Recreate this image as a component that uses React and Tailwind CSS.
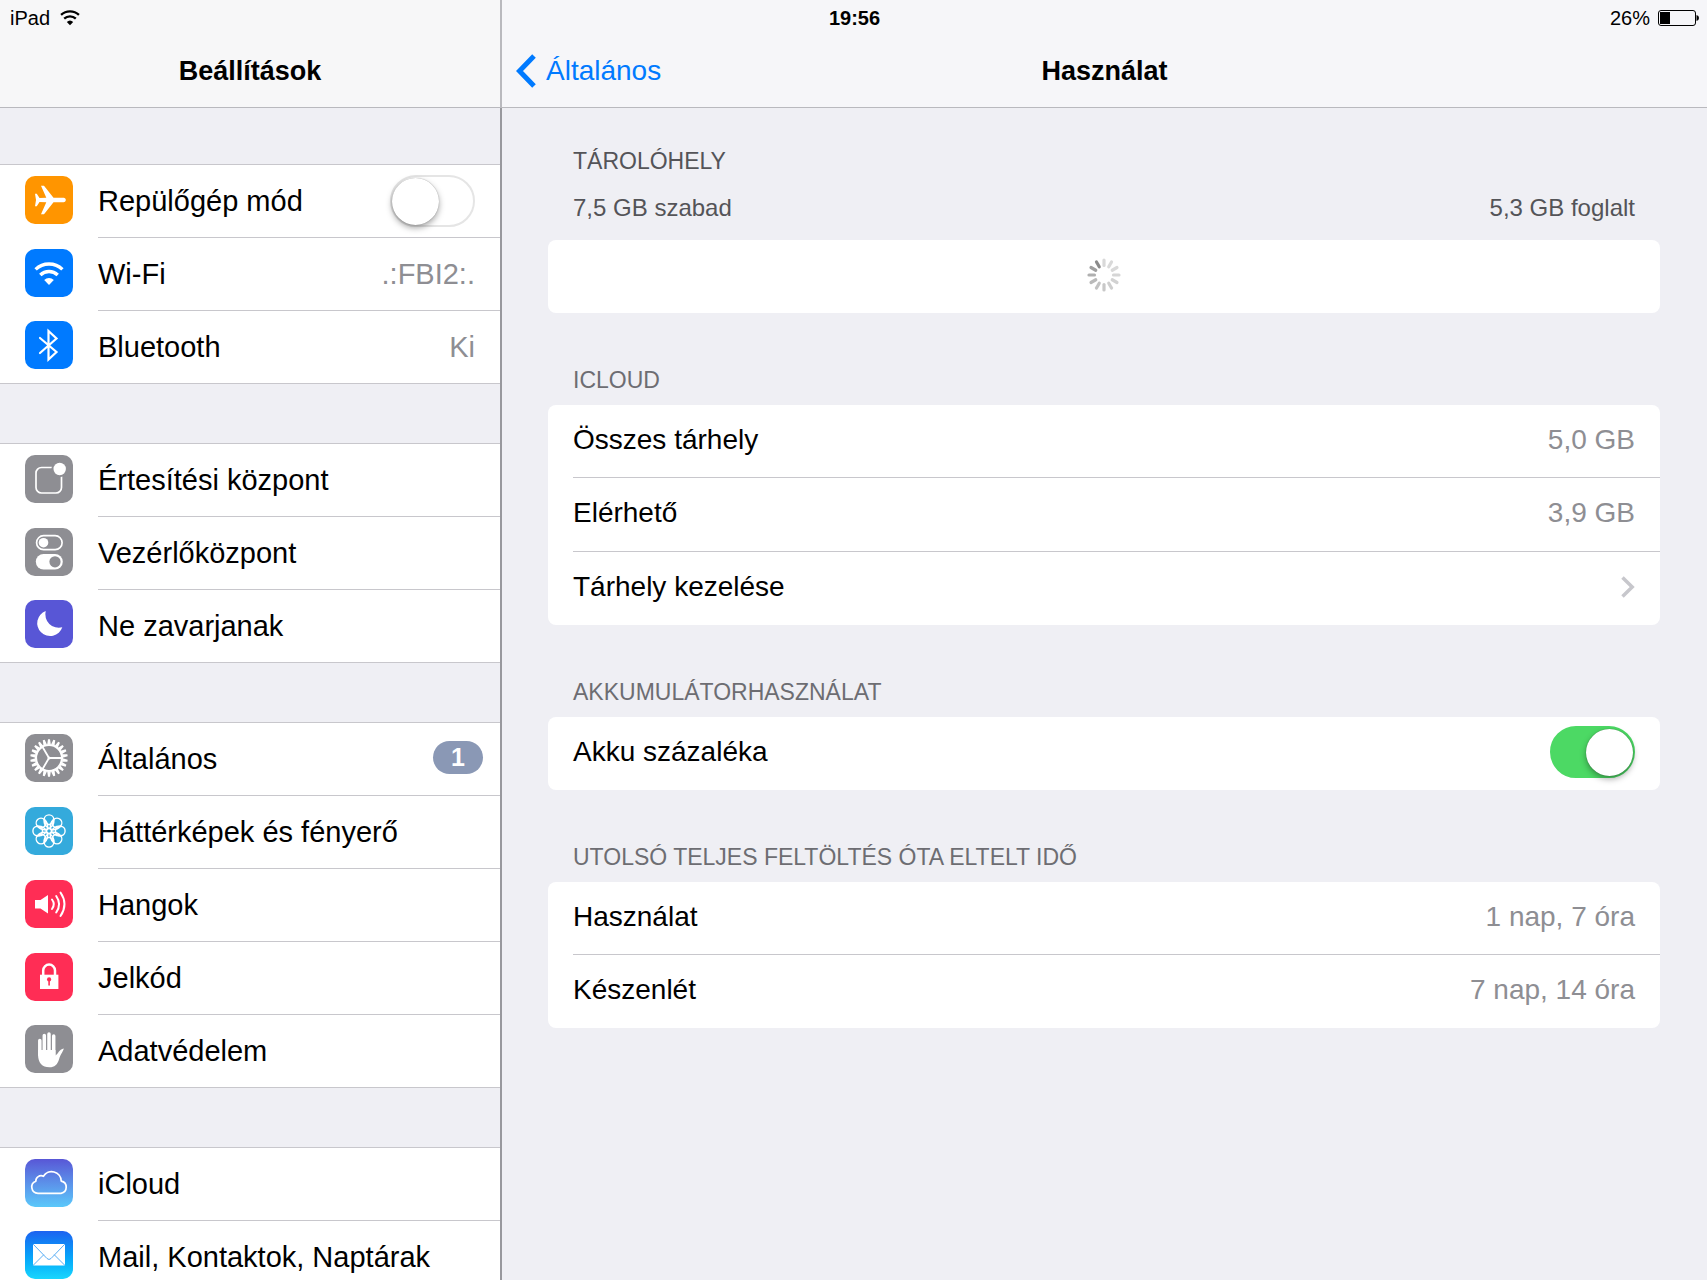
import React from "react";

function WifiGlyph({ className, viewBox }) {
  return (
    <svg className={className} viewBox={viewBox} fill="none" stroke="currentColor" aria-hidden="true">
      <path d="M10.6 20.4a19.2 19.2 0 0 1 26.8 0" strokeWidth="3.4" />
      <path d="M15.3 26a12.4 12.4 0 0 1 17.4 0" strokeWidth="3.4" />
      <path d="M19.2 31a7 7 0 0 1 9.600 0L24 36Z" fill="currentColor" stroke="none" />
    </svg>
  );
}

function Glyph({ children }) {
  return (
    <svg
      className="size-12"
      viewBox="0 0 48 48"
      fill="none"
      stroke="currentColor"
      strokeWidth="1.7"
      strokeLinecap="round"
      strokeLinejoin="round"
      aria-hidden="true"
    >
      {children}
    </svg>
  );
}

const PlaneIcon = () => (
  <Glyph>
    <path
      stroke="none"
      fill="currentColor"
      d="M38.6 21.8c1.4 0 2.2 1 2.2 2.2s-.8 2.2-2.2 2.2H28.5L19 38.2h-3L21.3 26.3l-6.800-.3-2.700 4.200H10L11 24l-1-6.200h1.800l2.700 4.200 6.800-.3L16 9.800h3l9.500 12Z"
    />
  </Glyph>
);

const BluetoothIcon = () => (
  <Glyph>
    <path d="M15 17 31.500 31l-8 7.500V10l8 7.500L15 32" strokeWidth="2.2" strokeLinejoin="miter" />
  </Glyph>
);

const NotificationIcon = () => (
  <Glyph>
    <rect x="11" y="12.5" width="25.5" height="25.5" rx="5.5" />
    <circle cx="34.7" cy="14" r="8.3" fill="#8e8e93" stroke="none" />
    <circle cx="34.7" cy="14" r="6.2" fill="currentColor" stroke="none" />
  </Glyph>
);

const ControlIcon = () => (
  <Glyph>
    <rect x="11.6" y="7.7" width="25.5" height="14" rx="7" />
    <circle cx="18.5" cy="14.7" r="4.8" fill="currentColor" stroke="none" />
    <rect x="10.8" y="26" width="27" height="15.6" rx="7.8" fill="currentColor" stroke="none" />
    <circle cx="30" cy="33.8" r="5.6" fill="#8e8e93" stroke="none" />
  </Glyph>
);

const MoonIcon = () => (
  <Glyph>
    <path
      d="M20.7 11a12.9 12.9 0 1 0 16.6 16.3A13.5 13.5 0 0 1 20.7 11Z"
      fill="currentColor"
      stroke="none"
    />
  </Glyph>
);

const teeth = Array.from({ length: 22 }, (_, i) => (i * 360) / 22);

const GearIcon = () => (
  <Glyph>
    {teeth.map((a) => (
      <path
        key={a}
        d="M22.2 10.5 23 5.300h2L25.800 10.500Z"
        fill="currentColor"
        stroke="none"
        transform={`rotate(${a} 24 24)`}
      />
    ))}
    <circle cx="24" cy="24" r="13" strokeWidth="2.2" />
    <path d="M24 24h12.500M24 24l-6.300-10.800M24 24l-6.300 10.800" strokeWidth="1.8" />
    <circle cx="24" cy="24" r="1.5" fill="currentColor" stroke="none" />
  </Glyph>
);

const petals = [0, 45, 90, 135, 180, 225, 270, 315];

const FlowerIcon = () => (
  <Glyph>
    {petals.map((a) => (
      <g key={a} transform={`rotate(${a} 24 24)`} strokeWidth="1.4">
        <circle cx="24" cy="12.7" r="4.8" />
        <path d="M24 21.500c-3.600-2-5.200-5-4.800-8.800M24 21.500c3.600-2 5.200-5 4.800-8.800" />
      </g>
    ))}
    <circle cx="24" cy="24" r="2.4" strokeWidth="1.3" />
  </Glyph>
);

const SpeakerIcon = () => (
  <Glyph>
    <path d="M10 20h5.500l7.500-5v18.500l-7.500-5H10Z" fill="currentColor" stroke="none" />
    <path d="M27 19.500q3.600 4.700 0 9.500M31.200 16q5.800 8.300 0 16.500M35.500 12.500q8 11.700 0 23.500" strokeWidth="2" />
  </Glyph>
);

const LockIcon = () => (
  <Glyph>
    <path d="M18.2 22.500v-5a5.900 5.900 0 0 1 11.800 0v5" strokeWidth="2.5" />
    <rect x="15" y="21.7" width="18.4" height="14.3" fill="currentColor" stroke="none" />
    <circle cx="24.1" cy="26.4" r="2.1" fill="#ff2d55" stroke="none" />
    <path d="M24.1 27v5" stroke="#ff2d55" strokeWidth="1.6" />
  </Glyph>
);

const HandIcon = () => (
  <Glyph>
    <path d="M14.8 15.500V30M19.300 10.500V30M24 9V30M28.700 11V30" strokeWidth="3.5" />
    <path
      d="M13.1 25H30.500v5.500c2.500-1.500 3.500-6 8.300-7-.4 2.500-3.200 5.500-4.800 11-1.500 5-4.500 7.800-9.500 7.800-7.500 0-11.400-4.800-11.400-12.300Z"
      fill="currentColor"
      stroke="none"
    />
  </Glyph>
);

const CloudIcon = () => (
  <Glyph>
    <path d="M13 34.300A6.200 6.200 0 0 1 10.800 22.300a5.300 5.300 0 0 1 7.600-5A9.600 9.600 0 0 1 36.200 22.100 6.200 6.200 0 0 1 36 34.300Z" />
  </Glyph>
);

const MailIcon = () => (
  <Glyph>
    <rect x="8" y="13" width="32" height="21.4" rx="1" fill="currentColor" stroke="none" />
    <path d="M8.500 13.500 22 27.500q2 2 4 0L39.500 13.500M8.500 34l10-10M39.500 34l-10-10" stroke="#5aaef5" strokeWidth="1" />
  </Glyph>
);

const TileWifi = () => <WifiGlyph className="size-12" viewBox="0 0 48 48" />;

const groups = [
  [
    { label: "Repülőgép mód", icon: PlaneIcon, tile: "bg-[#ff9500]", toggle: true },
    { label: "Wi-Fi", icon: TileWifi, tile: "bg-[#007aff]", value: ".:FBI2:." },
    { label: "Bluetooth", icon: BluetoothIcon, tile: "bg-[#007aff]", value: "Ki" },
  ],
  [
    { label: "Értesítési központ", icon: NotificationIcon, tile: "bg-[#8e8e93]" },
    { label: "Vezérlőközpont", icon: ControlIcon, tile: "bg-[#8e8e93]" },
    { label: "Ne zavarjanak", icon: MoonIcon, tile: "bg-[#5856d6]" },
  ],
  [
    { label: "Általános", icon: GearIcon, tile: "bg-[#8e8e93]", badge: "1" },
    { label: "Háttérképek és fényerő", icon: FlowerIcon, tile: "bg-[#34aadc]" },
    { label: "Hangok", icon: SpeakerIcon, tile: "bg-[#ff2d55]" },
    { label: "Jelkód", icon: LockIcon, tile: "bg-[#ff2d55]" },
    { label: "Adatvédelem", icon: HandIcon, tile: "bg-[#8e8e93]" },
  ],
  [
    { label: "iCloud", icon: CloudIcon, tile: "bg-linear-to-b from-[#5856d6] to-[#5ac8fa]" },
    { label: "Mail, Kontaktok, Naptárak", icon: MailIcon, tile: "bg-linear-to-b from-[#1d62f0] to-[#1ad6fd]" },
  ],
];

function Switch({ id, defaultChecked }) {
  return (
    <input
      id={id}
      type="checkbox"
      role="switch"
      defaultChecked={defaultChecked}
      className="flex h-[52px] w-[85px] shrink-0 appearance-none items-center rounded-full border-2 border-[#e5e5e5] bg-white before:size-[47px] before:rounded-full before:bg-white before:shadow-[0_3px_6px_rgba(0,0,0,0.35),0_0_1px_rgba(0,0,0,0.4)] before:content-[''] checked:justify-end checked:border-[#4cd964] checked:bg-[#4cd964]"
    />
  );
}

function SidebarRow({ item, last }) {
  const Icon = item.icon;
  const Row = item.toggle ? "label" : "button";
  const rowProps = item.toggle ? { htmlFor: "airplane" } : { type: "button" };
  return (
    <li className={last ? "border-b border-[#c8c7cc]" : ""}>
      <Row
        {...rowProps}
        className={
          last
            ? "flex h-[72px] w-full items-center pl-[25px] text-left"
            : "flex h-[73px] w-full items-center pl-[25px] text-left"
        }
      >
        <span className={`mb-1 size-12 shrink-0 overflow-hidden rounded-[10px] text-white ${item.tile}`}>
          <Icon />
        </span>
        <span
          className={
            last
              ? "ml-[25px] flex h-full flex-1 items-center justify-between"
              : "ml-[25px] flex h-full flex-1 items-center justify-between border-b border-[#c8c7cc]"
          }
        >
          <span>{item.label}</span>
          {item.toggle && (
            <span className="pr-[25px]">
              <Switch id="airplane" />
            </span>
          )}
          {item.value && <span className="pr-[25px] text-[#8e8e93]">{item.value}</span>}
          {item.badge && (
            <span className="mr-[17px] mb-1 flex h-[33px] w-[50px] items-center justify-center rounded-full bg-[#8a98b5] text-[25px] font-bold text-white">
              {item.badge}
            </span>
          )}
        </span>
      </Row>
    </li>
  );
}

const shades = [
  "#d9d9d9", "#d9d9d9", "#d9d9d9", "#d6d6d6", "#d2d2d2", "#cecece",
  "#c8c8c8", "#c2c2c2", "#bababa", "#b0b0b0", "#a0a0a0", "#8a8a8a",
];

function Spinner() {
  return (
    <svg className="size-9" viewBox="-18 -18 36 36" strokeWidth="3.2" strokeLinecap="round" role="img" aria-label="Betöltés">
      {shades.map((c, i) => (
        <path key={i} d="M0-9.500V-15" stroke={c} transform={`rotate(${i * 30})`} />
      ))}
    </svg>
  );
}

function Section({ title, children }) {
  return (
    <section>
      <h2 className="px-[25px] pt-[53px] pb-[11px] text-[23px] leading-7 text-[#6d6d72]">{title}</h2>
      <div className="rounded-lg bg-white pl-[25px]">{children}</div>
    </section>
  );
}

const rowClass =
  "flex h-[73px] w-full items-center justify-between border-b border-[#c8c7cc] pr-[25px] pb-[3px] text-left last:border-b-0";

function ValueRow({ label, value }) {
  return (
    <div className={rowClass}>
      <dt>{label}</dt>
      <dd className="text-[#8e8e93]">{value}</dd>
    </div>
  );
}

export default function App() {
  return (
    <div className="relative flex h-screen overflow-hidden bg-[#efeff4] font-['Liberation_Sans',Arial,sans-serif] text-[29px] leading-9 text-black">
      <div className="absolute inset-x-0 top-0 grid h-[35px] grid-cols-3 items-center pr-2 pl-2.5 text-xl leading-6">
        <div className="flex items-center gap-2.5">
          <span>iPad</span>
          <WifiGlyph className="h-4 w-5" viewBox="9 13 30 24" />
        </div>
        <time className="text-center font-bold">19:56</time>
        <div className="flex items-center justify-end gap-2">
          <span>26%</span>
          <svg className="h-4 w-[41px]" viewBox="0 0 41 16" aria-hidden="true">
            <rect x="0.5" y="0.5" width="37" height="15" rx="2.5" fill="none" stroke="black" />
            <rect x="2" y="2" width="10" height="12" fill="black" />
            <path d="M38.500 5q2.500.5 2.500 3t-2.500 3Z" fill="black" />
          </svg>
        </div>
      </div>

      <aside className="flex w-[502px] shrink-0 flex-col">
        <header className="flex h-[108px] shrink-0 items-center justify-center border-r-2 border-b border-r-[#b9b9be] border-b-[#b9b9be] bg-[#f7f7f8] pt-[35px]">
          <h1 className="text-[27px] font-bold">Beállítások</h1>
        </header>
        <nav className="flex flex-1 flex-col gap-[59px] overflow-hidden border-r-2 border-[#98989d] pt-14" aria-label="Beállítások">
          {groups.map((items, i) => (
            <ul key={i} className="shrink-0 border-t border-[#c8c7cc] bg-white">
              {items.map((item, j) => (
                <SidebarRow key={item.label} item={item} last={j === items.length - 1} />
              ))}
            </ul>
          ))}
        </nav>
      </aside>

      <main className="flex min-w-0 flex-1 flex-col text-[28px]">
        <header className="grid h-[108px] shrink-0 grid-cols-[1fr_auto_1fr] items-center border-b border-[#b9b9be] bg-[#f6f6f9] px-3.5 pt-[35px]">
          <a href="#altalanos" className="flex items-center gap-2.5 justify-self-start text-[#007aff]">
            <svg className="h-[34px] w-5" viewBox="0 0 20 34" fill="none" stroke="currentColor" strokeWidth="5" aria-hidden="true">
              <path d="M18 2 3.500 17 18 32" />
            </svg>
            Általános
          </a>
          <h1 className="text-[27px] font-bold">Használat</h1>
        </header>

        <div className="flex-1 overflow-hidden pr-[47px] pl-[46px]">
          <section>
            <div className="px-[25px] pt-[39px] pb-[18px] text-[#545458]">
              <h2 className="text-[23px] leading-7">TÁROLÓHELY</h2>
              <div className="mt-[19px] flex justify-between text-2xl leading-7">
                <span>7,5 GB szabad</span>
                <span>5,3 GB foglalt</span>
              </div>
            </div>
            <div className="flex h-[73px] items-center justify-center rounded-lg bg-white pb-[3px]">
              <Spinner />
            </div>
          </section>

          <Section title="ICLOUD">
            <dl className="border-b border-[#c8c7cc]">
              <ValueRow label="Összes tárhely" value="5,0 GB" />
              <ValueRow label="Elérhető" value="3,9 GB" />
            </dl>
            <button type="button" className={rowClass}>
              Tárhely kezelése
              <svg className="h-[22px] w-3.5" viewBox="0 0 14 22" fill="none" stroke="#c7c7cc" strokeWidth="3.5" aria-hidden="true">
                <path d="M1.500 1.500 11.200 11 1.500 20.500" />
              </svg>
            </button>
          </Section>

          <Section title="AKKUMULÁTORHASZNÁLAT">
            <div className={rowClass}>
              <label htmlFor="battery-percent">Akku százaléka</label>
              <Switch id="battery-percent" defaultChecked />
            </div>
          </Section>

          <Section title="UTOLSÓ TELJES FELTÖLTÉS ÓTA ELTELT IDŐ">
            <dl>
              <ValueRow label="Használat" value="1 nap, 7 óra" />
              <ValueRow label="Készenlét" value="7 nap, 14 óra" />
            </dl>
          </Section>
        </div>
      </main>
    </div>
  );
}
